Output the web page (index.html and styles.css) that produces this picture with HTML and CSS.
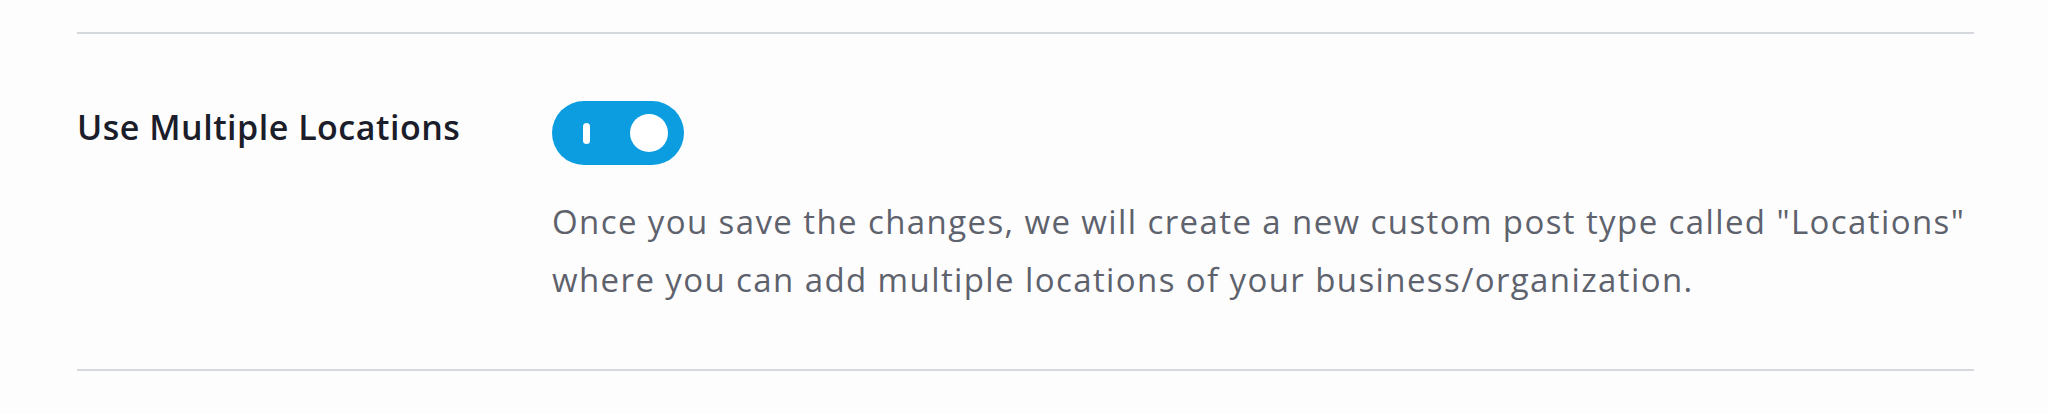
FILE: index.html
```html
<!DOCTYPE html>
<html lang="en">
<head>
<meta charset="utf-8">
<title>Settings</title>
<link rel="stylesheet" href="styles.css">
</head>
<body>
<div class="page">
  <div class="setting-row">
    <div class="setting-label">Use Multiple Locations</div>
    <div class="setting-control">
      <button class="toggle is-on" type="button" aria-pressed="true">
        <span class="toggle-bar"></span>
        <span class="toggle-knob"></span>
      </button>
      <p class="setting-desc">Once you save the changes, we will create a new custom post type called "Locations" where you can add multiple locations of your business/organization.</p>
    </div>
  </div>
</div>
</body>
</html>
```

FILE: styles.css
```css
html, body {
  margin: 0;
  padding: 0;
  background: #fdfdfd;
}

body {
  font-family: "Open Sans", "Noto Sans", sans-serif;
}

.page {
  padding: 32px 0 0 77px;
  width: 1897px;
}

.setting-row {
  display: flex;
  border-top: 2px solid #d5d8dc;
  border-bottom: 2px solid #d5d8dc;
  padding: 67px 0 0 0;
  height: 268px;
}

.setting-label {
  width: 475px;
  flex: none;
  font-size: 34px;
  font-weight: 600;
  letter-spacing: 0.5px;
  color: #1b1d2a;
  line-height: 42px;
  padding-top: 5px;
}

.setting-control {
  flex: 1;
  display: flex;
  flex-direction: column;
  align-items: flex-start;
}

.toggle {
  position: relative;
  width: 132px;
  height: 64px;
  border: none;
  border-radius: 32px;
  background: #0b9de0;
  padding: 0 16px 0 31px;
  display: flex;
  align-items: center;
  justify-content: space-between;
  cursor: pointer;
}

.toggle-bar {
  width: 7px;
  height: 21px;
  border-radius: 4px;
  background: #ffffff;
}

.toggle-knob {
  width: 38px;
  height: 38px;
  border-radius: 50%;
  background: #ffffff;
}

.setting-desc {
  margin: 28px 0 0 0;
  font-size: 33px;
  letter-spacing: 1.4px;
  line-height: 58px;
  color: #5e626d;
}
```
